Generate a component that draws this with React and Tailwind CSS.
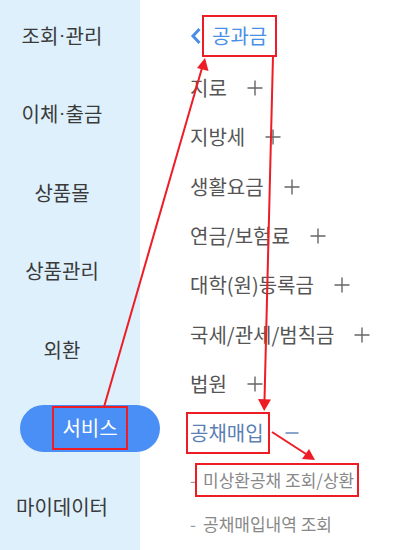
import React from 'react';

const sideMenu = ['조회·관리', '이체·출금', '상품몰', '상품관리', '외환', '서비스', '마이데이터'];

const billItems = ['지로', '지방세', '생활요금', '연금/보험료', '대학(원)등록금', '국세/관세/범칙금', '법원'];

const bondSubItems = ['미상환공채 조회/상환', '공채매입내역 조회'];

function Plus() {
    return (
        <svg width="16" height="16" viewBox="0 0 16 16" className="ml-[20px] shrink-0">
            <path d="M8 0.5V15.5M0.5 8H15.5" stroke="#666" strokeWidth="1.4" />
        </svg>
    );
}

function Minus() {
    return (
        <svg width="14" height="16" viewBox="0 0 14 16" className="ml-[21px] shrink-0">
            <path d="M0.5 8H13.5" stroke="#5b7fb5" strokeWidth="1.4" />
        </svg>
    );
}

// label with a narrow latin middle dot instead of the full-width CJK one
function MenuLabel({ text }) {
    const parts = text.split('·');
    if (parts.length === 1) return text;
    return (
        <>
            {parts[0]}
            <span className="font-['Roboto',sans-serif] mx-[1px]">·</span>
            {parts[1]}
        </>
    );
}

// red highlight frame drawn around a label
function Frame({ className }) {
    return <span className={`absolute border-2 border-[#ee1c25] pointer-events-none ${className}`} />;
}

function Arrows() {
    return (
        <svg width="400" height="550" viewBox="0 0 400 550" className="absolute inset-0 pointer-events-none z-20">
            <g stroke="#ee1c25" strokeWidth="2" fill="none">
                <path d="M104 407L202 68" />
                <path d="M273 56L264.5 400" />
                <path d="M272 432L306 454" />
            </g>
            <g fill="#ee1c25">
                <path d="M205 58L208.5 71L197 68Z" />
                <path d="M264.2 411L258 399L271 399.5Z" />
                <path d="M315 460L302 459L309 449Z" />
            </g>
        </svg>
    );
}

export default function App() {
    return (
        <div className="relative w-[400px] h-[550px] flex overflow-hidden bg-white font-['Noto_Sans_CJK_KR','Noto_Sans',sans-serif]">
            {/* left category menu */}
            <div className="w-[140px] shrink-0 bg-[#ddf0fc] flex flex-col pt-[12px] gap-[31.5px]">
                {sideMenu.map((label) =>
                    label === '서비스' ? (
                        <div
                            key={label}
                            className="relative z-10 ml-[20px] w-[140px] h-[47px] shrink-0 rounded-full bg-[#4a8ff5] flex items-center justify-center text-white text-[20px]"
                        >
                            <span className="relative">
                                서비스
                                <Frame className="-inset-x-[10px] -inset-y-[7px]" />
                            </span>
                        </div>
                    ) : (
                        <div
                            key={label}
                            className="w-[124px] h-[47px] shrink-0 flex items-center justify-center text-[20px] text-[#3a3a3a]"
                        >
                            <MenuLabel text={label} />
                        </div>
                    )
                )}
            </div>

            {/* right sub menu */}
            <div className="flex-1 pl-[50px] pt-[16px]">
                <div className="h-[40px] flex items-center">
                    <svg width="12" height="18" viewBox="0 0 12 18" className="shrink-0">
                        <path d="M9.5 2L3 9L9.5 16" stroke="#4a8fe6" strokeWidth="3" fill="none" />
                    </svg>
                    <span className="relative ml-[10px] text-[20px] text-[#4a8fe6]">
                        공과금
                        <Frame className="-inset-x-[10px] -inset-y-[6px]" />
                    </span>
                </div>

                <div className="mt-[7.5px] flex flex-col">
                    {billItems.map((label) => (
                        <div key={label} className="h-[49.3px] flex items-center text-[20px] text-[#555]">
                            <span>{label}</span>
                            <Plus />
                        </div>
                    ))}
                    <div className="h-[49.3px] flex items-center text-[20px] text-[#5b7fb5]">
                        <span className="relative">
                            공채매입
                            <Frame className="-left-[4px] -right-[6px] -inset-y-[6px]" />
                        </span>
                        <Minus />
                    </div>
                    {bondSubItems.map((label, i) => (
                        <div key={label} className="h-[44px] flex items-center text-[17px] text-[#888]">
                            <span className="w-[13px] text-[#999]">-</span>
                            <span className="relative">
                                {label}
                                {i === 0 && <Frame className="-left-[8px] -right-[5px] -inset-y-[4px]" />}
                            </span>
                        </div>
                    ))}
                </div>
            </div>

            <Arrows />
        </div>
    );
}
